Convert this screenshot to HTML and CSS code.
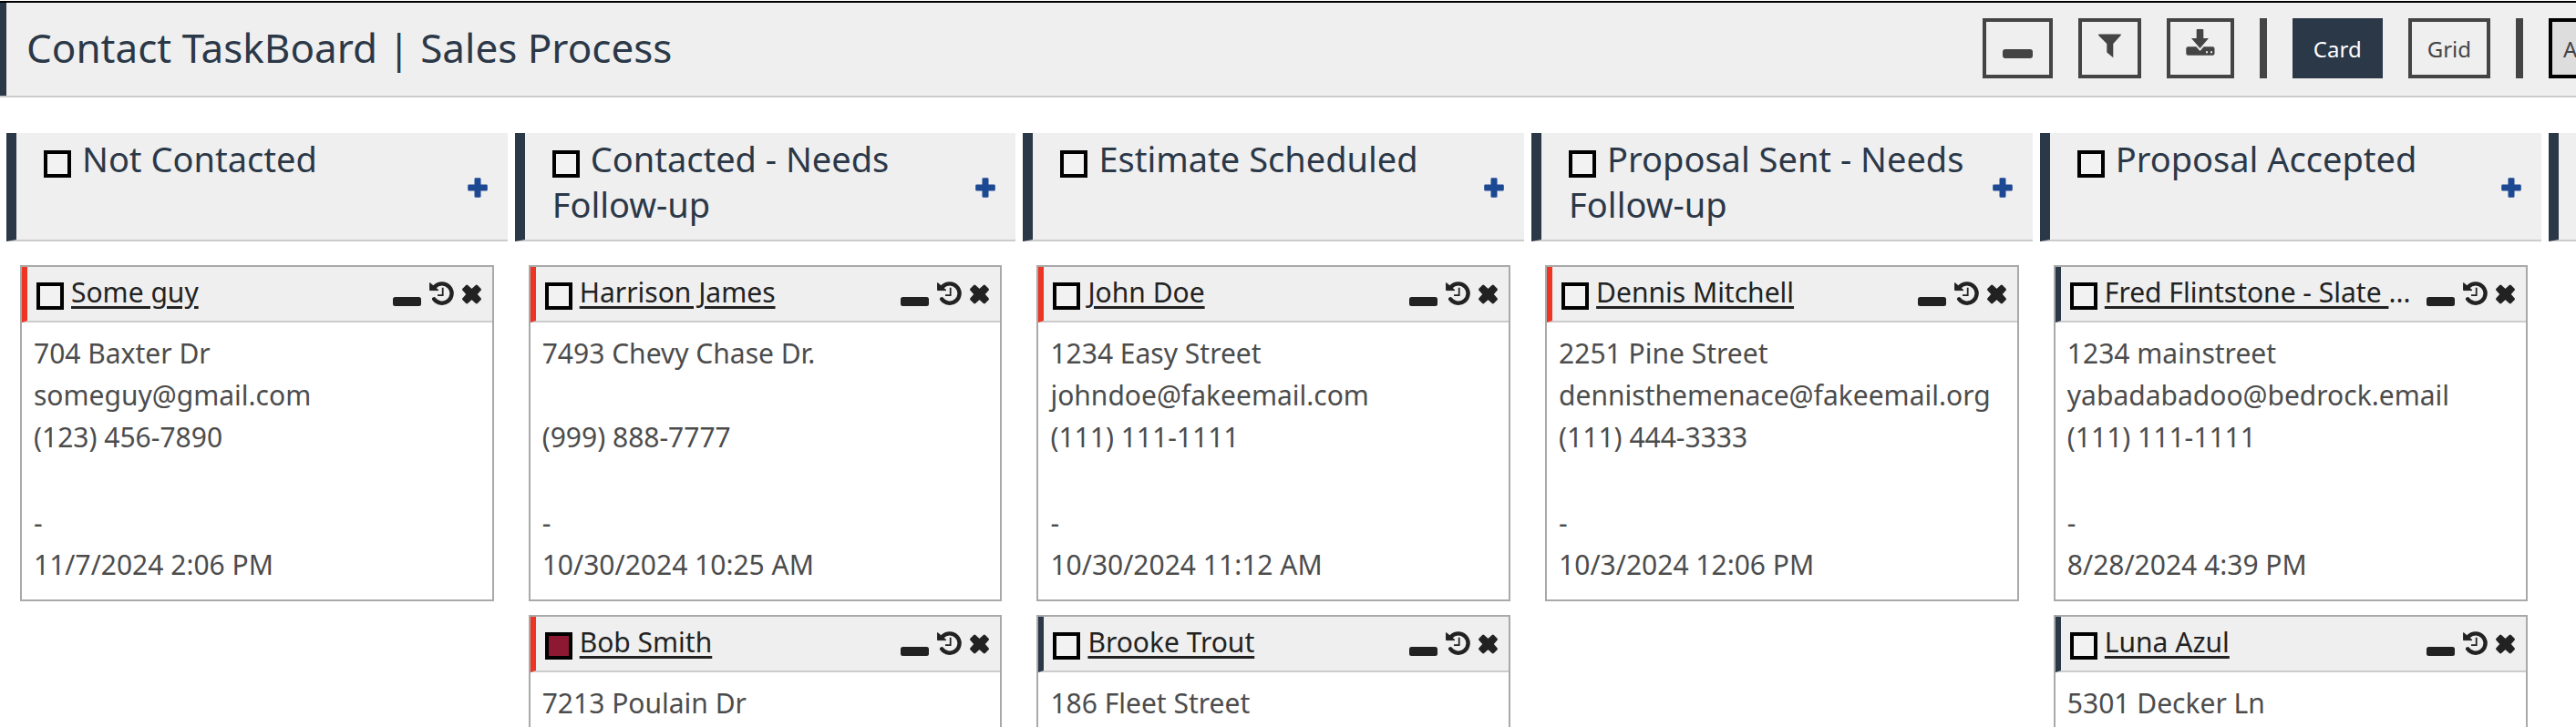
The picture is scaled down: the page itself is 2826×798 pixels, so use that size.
FILE: index.html
```html
<!DOCTYPE html>
<html lang="en">
<head>
<meta charset="utf-8">
<title>Contact TaskBoard</title>
<link rel="stylesheet" href="styles.css">
</head>
<body>
<svg class="sprite" aria-hidden="true">
  <symbol id="minus" viewBox="0 0 31 27"><rect y="17" width="31" height="10" rx="2.5"/></symbol>
  <symbol id="history" viewBox="0 0 27 27">
    <path d="M6 5.8A10.7 10.7 0 1 1 5.2 19.3" fill="none" stroke="currentColor" stroke-width="4.4" stroke-linecap="round"/>
    <path d="M.6 1.6 10 9.6H.6z" stroke="currentColor" stroke-linejoin="round"/>
    <path d="M14.7 6.8v8.4H9" fill="none" stroke="currentColor" stroke-width="1.8"/>
  </symbol>
  <symbol id="close" viewBox="0 0 21 27">
    <path d="M5.200 5 10.500 9.800 15.800 5l3.700 3.800L14.900 14l4.600 5.200-3.700 3.800-5.300-4.800L5.200 23l-3.700-3.800L6.100 14 1.500 8.800z" stroke="currentColor" stroke-width="2.800" stroke-linejoin="round"/>
  </symbol>
  <symbol id="plus" viewBox="0 0 22 22">
    <path d="M8.800 1.500h4.400v7.300h7.300v4.400h-7.300v7.300H8.800v-7.300H1.500V8.800h7.300z" stroke="currentColor" stroke-width="2.600" stroke-linejoin="round"/>
  </symbol>
</svg>

<header class="topbar">
  <h1 class="topbar-title">Contact TaskBoard | Sales Process</h1>
  <div class="toolbar">
    <button class="btn" aria-label="Collapse all"><svg width="35" height="44" viewBox="0 0 35 44"><rect x="1" y="23" width="33" height="10" rx="3"/></svg></button>
    <button class="btn" aria-label="Filter"><svg width="27" height="44" viewBox="0 0 27 44"><path d="M1.500 6.500h24q.8.500 0 1.500L17.300 17v15.200L10.300 26.500V17L1.300 8q-.6-1 .2-1.500z"/></svg></button>
    <button class="btn" aria-label="Download"><svg width="32" height="44" viewBox="0 0 32 44"><rect x=".3" y="20.300" width="31.200" height="9.500" rx="2.200"/><path class="cut" d="M11.700 2q0-1 1-1h5.600q1 0 1 1v9H25l-9.500 11L6 11h5.700z"/><path class="dot" d="M22 25.200h2v2h-2zM27 25.200h2v2h-2z"/></svg></button>
    <span class="divider"></span>
    <button class="btn btn-active">Card</button>
    <button class="btn">Grid</button>
    <span class="divider"></span>
    <button class="btn btn-cut">A</button>
  </div>
</header>

<main class="board">
  <section class="column">
    <div class="column-head">
      <h2 class="column-title"><input type="checkbox" class="check" id="c1"><label for="c1">Not Contacted</label></h2>
      <button class="add" aria-label="Add"><svg width="22" height="22"><use href="#plus"/></svg></button>
    </div>
    <div class="cards">
      <article class="card">
        <div class="card-head hot">
          <input type="checkbox" class="check" aria-label="Select Some guy">
          <a class="card-name" href="#">Some guy</a>
          <div class="card-tools">
            <button class="tool" aria-label="Collapse"><svg width="31" height="27"><use href="#minus"/></svg></button>
            <button class="tool" aria-label="History"><svg width="27" height="27"><use href="#history"/></svg></button>
            <button class="tool" aria-label="Remove"><svg width="21" height="27"><use href="#close"/></svg></button>
          </div>
        </div>
        <div class="card-body"><p>704 Baxter Dr</p><p>someguy@gmail.com</p><p>(123) 456-7890</p><p></p><p class="meta">-</p><p>11/7/2024 2:06 PM</p></div>
      </article>
    </div>
  </section>

  <section class="column">
    <div class="column-head">
      <h2 class="column-title"><input type="checkbox" class="check" id="c2"><label for="c2">Contacted - Needs Follow-up</label></h2>
      <button class="add" aria-label="Add"><svg width="22" height="22"><use href="#plus"/></svg></button>
    </div>
    <div class="cards">
      <article class="card">
        <div class="card-head hot">
          <input type="checkbox" class="check" aria-label="Select Harrison James">
          <a class="card-name" href="#">Harrison James</a>
          <div class="card-tools">
            <button class="tool" aria-label="Collapse"><svg width="31" height="27"><use href="#minus"/></svg></button>
            <button class="tool" aria-label="History"><svg width="27" height="27"><use href="#history"/></svg></button>
            <button class="tool" aria-label="Remove"><svg width="21" height="27"><use href="#close"/></svg></button>
          </div>
        </div>
        <div class="card-body"><p>7493 Chevy Chase Dr.</p><p></p><p>(999) 888-7777</p><p></p><p class="meta">-</p><p>10/30/2024 10:25 AM</p></div>
      </article>
      <article class="card">
        <div class="card-head hot">
          <input type="checkbox" class="check" aria-label="Select Bob Smith" checked>
          <a class="card-name" href="#">Bob Smith</a>
          <div class="card-tools">
            <button class="tool" aria-label="Collapse"><svg width="31" height="27"><use href="#minus"/></svg></button>
            <button class="tool" aria-label="History"><svg width="27" height="27"><use href="#history"/></svg></button>
            <button class="tool" aria-label="Remove"><svg width="21" height="27"><use href="#close"/></svg></button>
          </div>
        </div>
        <div class="card-body"><p>7213 Poulain Dr</p></div>
      </article>
    </div>
  </section>

  <section class="column">
    <div class="column-head">
      <h2 class="column-title"><input type="checkbox" class="check" id="c3"><label for="c3">Estimate Scheduled</label></h2>
      <button class="add" aria-label="Add"><svg width="22" height="22"><use href="#plus"/></svg></button>
    </div>
    <div class="cards">
      <article class="card">
        <div class="card-head hot">
          <input type="checkbox" class="check" aria-label="Select John Doe">
          <a class="card-name" href="#">John Doe</a>
          <div class="card-tools">
            <button class="tool" aria-label="Collapse"><svg width="31" height="27"><use href="#minus"/></svg></button>
            <button class="tool" aria-label="History"><svg width="27" height="27"><use href="#history"/></svg></button>
            <button class="tool" aria-label="Remove"><svg width="21" height="27"><use href="#close"/></svg></button>
          </div>
        </div>
        <div class="card-body"><p>1234 Easy Street</p><p>johndoe@fakeemail.com</p><p>(111) 111-1111</p><p></p><p class="meta">-</p><p>10/30/2024 11:12 AM</p></div>
      </article>
      <article class="card">
        <div class="card-head">
          <input type="checkbox" class="check" aria-label="Select Brooke Trout">
          <a class="card-name" href="#">Brooke Trout</a>
          <div class="card-tools">
            <button class="tool" aria-label="Collapse"><svg width="31" height="27"><use href="#minus"/></svg></button>
            <button class="tool" aria-label="History"><svg width="27" height="27"><use href="#history"/></svg></button>
            <button class="tool" aria-label="Remove"><svg width="21" height="27"><use href="#close"/></svg></button>
          </div>
        </div>
        <div class="card-body"><p>186 Fleet Street</p></div>
      </article>
    </div>
  </section>

  <section class="column">
    <div class="column-head">
      <h2 class="column-title"><input type="checkbox" class="check" id="c4"><label for="c4">Proposal Sent - Needs Follow-up</label></h2>
      <button class="add" aria-label="Add"><svg width="22" height="22"><use href="#plus"/></svg></button>
    </div>
    <div class="cards">
      <article class="card">
        <div class="card-head hot">
          <input type="checkbox" class="check" aria-label="Select Dennis Mitchell">
          <a class="card-name" href="#">Dennis Mitchell</a>
          <div class="card-tools">
            <button class="tool" aria-label="Collapse"><svg width="31" height="27"><use href="#minus"/></svg></button>
            <button class="tool" aria-label="History"><svg width="27" height="27"><use href="#history"/></svg></button>
            <button class="tool" aria-label="Remove"><svg width="21" height="27"><use href="#close"/></svg></button>
          </div>
        </div>
        <div class="card-body"><p>2251 Pine Street</p><p>dennisthemenace@fakeemail.org</p><p>(111) 444-3333</p><p></p><p class="meta">-</p><p>10/3/2024 12:06 PM</p></div>
      </article>
    </div>
  </section>

  <section class="column">
    <div class="column-head">
      <h2 class="column-title"><input type="checkbox" class="check" id="c5"><label for="c5">Proposal Accepted</label></h2>
      <button class="add" aria-label="Add"><svg width="22" height="22"><use href="#plus"/></svg></button>
    </div>
    <div class="cards">
      <article class="card">
        <div class="card-head">
          <input type="checkbox" class="check" aria-label="Select Fred Flintstone">
          <a class="card-name" href="#">Fred Flintstone - Slate </a><span class="more">...</span>
          <div class="card-tools">
            <button class="tool" aria-label="Collapse"><svg width="31" height="27"><use href="#minus"/></svg></button>
            <button class="tool" aria-label="History"><svg width="27" height="27"><use href="#history"/></svg></button>
            <button class="tool" aria-label="Remove"><svg width="21" height="27"><use href="#close"/></svg></button>
          </div>
        </div>
        <div class="card-body"><p>1234 mainstreet</p><p>yabadabadoo@bedrock.email</p><p>(111) 111-1111</p><p></p><p class="meta">-</p><p>8/28/2024 4:39 PM</p></div>
      </article>
      <article class="card">
        <div class="card-head">
          <input type="checkbox" class="check" aria-label="Select Luna Azul">
          <a class="card-name" href="#">Luna Azul</a>
          <div class="card-tools">
            <button class="tool" aria-label="Collapse"><svg width="31" height="27"><use href="#minus"/></svg></button>
            <button class="tool" aria-label="History"><svg width="27" height="27"><use href="#history"/></svg></button>
            <button class="tool" aria-label="Remove"><svg width="21" height="27"><use href="#close"/></svg></button>
          </div>
        </div>
        <div class="card-body"><p>5301 Decker Ln</p></div>
      </article>
    </div>
  </section>

  <section class="column">
    <div class="column-head"></div>
  </section>
</main>
</body>
</html>
```
FILE: styles.css
```css
* {
  box-sizing: border-box;
}

body {
  display: flex;
  flex-direction: column;
  margin: 0;
  padding-top: 1px;
  height: 100vh;
  overflow: hidden;
  background: #fff;
  color: #4c4c4c;
  font-family: "Noto Sans", sans-serif;
}

h1,
h2,
p {
  margin: 0;
  font-weight: 400;
}

button {
  font-family: inherit;
  color: inherit;
}

svg {
  display: block;
  fill: currentColor;
}

.sprite {
  position: absolute;
  width: 0;
  height: 0;
}

.topbar {
  display: flex;
  flex: none;
  justify-content: space-between;
  border-top: 2px solid #000;
  background: #efefef;
  box-shadow: inset 7px 0 #2b3848;
  border-bottom: 2px solid #ccc;
}

.topbar-title {
  padding: 0 0 4px 29px;
  color: #2b3848;
  font-size: 44px;
  line-height: 98px;
  white-space: nowrap;
}

.toolbar {
  display: flex;
  gap: 28px;
  padding: 17px 0 19px;
}

.btn {
  display: flex;
  align-items: center;
  padding: 0 17px;
  border: 4px solid #444;
  background: #efefef;
  color: #444;
  font-size: 24px;
}

.btn-active {
  padding: 0 19px;
  border-color: #2b3848;
  background: #2b3848;
  color: #fff;
}

.btn-cut {
  width: 30px;
  padding: 0 0 0 12px;
  border-color: #000;
  border-right: 0;
  background: #ddd;
  overflow: hidden;
}

.cut {
  stroke: #efefef;
  stroke-width: 4;
  paint-order: stroke;
}

.dot {
  fill: #efefef;
}

.divider {
  width: 8px;
  background: #444;
}

.board {
  display: grid;
  flex: 1;
  min-height: 0;
  grid-auto-flow: column;
  grid-auto-columns: 19.5%;
  gap: 8px;
  padding: 39px 0 0 7px;
  overflow: hidden;
}

.column-head {
  display: flex;
  justify-content: space-between;
  align-items: flex-start;
  gap: 12px;
  min-height: 119px;
  padding: 3px 22px 14px 30px;
  border-left: 11px solid #2b3848;
  border-bottom: 2px solid #ccc;
  background: #efefef;
}

.column-title {
  color: #2b3848;
  font-size: 38px;
  line-height: 50px;
}

.check {
  appearance: none;
  flex: none;
  width: 30px;
  height: 30px;
  margin: 0;
  border: 4px solid #000;
  background: #f2f2f2;
}

.check:checked {
  background: #8c1931;
}

.column-title .check {
  margin-right: 12px;
  vertical-align: -6px;
}

.add {
  align-self: center;
  margin-top: 14px;
  padding: 0;
  border: 0;
  background: none;
  color: #1d4993;
}

.cards {
  display: grid;
  gap: 15px;
  padding: 26px 15px 0;
}

.card {
  border: 2px solid #a9a9a9;
  background: #fff;
}

.card:nth-child(2) {
  min-height: 369px;
}

.card-head {
  display: flex;
  align-items: flex-start;
  height: 61px;
  padding: 0 12px 0 10px;
  border-left: 6px solid #2b3848;
  border-bottom: 2px solid #ccc;
  background: #efefef;
  color: #222;
  font-size: 30px;
  line-height: 55px;
}

.card-head.hot {
  border-left-color: #ee3524;
}

.card-head .check {
  margin: 17px 8px 0 0;
}

.card-name {
  color: #222;
  white-space: pre;
  text-decoration-thickness: 3px;
  text-underline-offset: 4px;
}

.card-tools {
  display: flex;
  gap: 9px;
  margin: 16px 0 0 auto;
}

.tool {
  padding: 0;
  border: 0;
  background: none;
}

.card-body {
  padding: 11px 13px 15px;
  font-size: 30px;
  line-height: 46px;
}

.card-body p {
  min-height: 46px;
}

.card-body .meta {
  margin-top: 2px;
}
```
